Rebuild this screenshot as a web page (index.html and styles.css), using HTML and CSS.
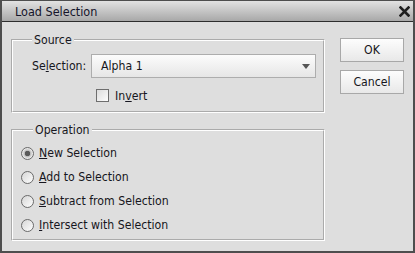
FILE: index.html
```html
<!DOCTYPE html>
<html lang="en">

<head>
  <meta charset="UTF-8">
  <title>Load Selection</title>
  <link rel="stylesheet" href="styles.css">
</head>

<body>
  <div class="dialog">
    <div class="titlebar">
      <span class="title">Load Selection</span>
      <svg class="close" width="11" height="11" viewBox="0 0 11 11">
        <path d="M1.5 1.5 L9.5 9.5 M9.5 1.5 L1.5 9.5" stroke="#1e1e1e" stroke-width="2.6" stroke-linecap="square" />
      </svg>
    </div>

    <div class="content">
      <div class="groups">
        <fieldset class="group group-source">
          <legend>Source</legend>
          <div class="field-row">
            <span class="field-label">Se<u>l</u>ection:</span>
            <div class="select">
              <span>Alpha 1</span>
              <span class="arrow"></span>
            </div>
          </div>
          <div class="check-row">
            <span class="checkbox"></span>
            <span>In<u>v</u>ert</span>
          </div>
        </fieldset>

        <fieldset class="group group-operation">
          <legend>Operation</legend>
          <div class="radio-row"><span class="radio checked"></span><span><u>N</u>ew Selection</span></div>
          <div class="radio-row"><span class="radio"></span><span><u>A</u>dd to Selection</span></div>
          <div class="radio-row"><span class="radio"></span><span><u>S</u>ubtract from Selection</span></div>
          <div class="radio-row"><span class="radio"></span><span><u>I</u>ntersect with Selection</span></div>
        </fieldset>
      </div>

      <div class="buttons">
        <button class="btn">OK</button>
        <button class="btn">Cancel</button>
      </div>
    </div>
  </div>
</body>

</html>
```

FILE: styles.css
```css
body {
  margin: 0;
  padding: 0;
  background: #dedede;
  font-family: "DejaVu Sans Condensed", "DejaVu Sans", sans-serif;
  font-stretch: condensed;
  font-size: 12.2px;
  color: #161620;
}

.dialog {
  width: 415px;
  height: 253px;
  box-sizing: border-box;
  border: 2px solid #4e4e4e;
  border-top-width: 1px;
  background: #dedede;
}

.titlebar {
  height: 20px;
  border-bottom: 1px solid #2e2e2e;
  background: linear-gradient(to bottom, #e2e2e2, #a8a8a8);
  display: flex;
  align-items: center;
  justify-content: space-between;
  padding: 0 3px 0 13px;
}

.title {
  font-size: 12.5px;
  color: #14142a;
}

.close {
  display: block;
  margin-top: 1px;
}

.content {
  display: flex;
  padding: 11px 0 0 9px;
}

.groups {
  width: 314px;
}

.group {
  margin: 0;
  border: 2px groove #ffffff;
  min-width: 0;
}

.group legend {
  padding: 0 2px;
  line-height: 14px;
  background: #dedede;
}

.group-source {
  padding: 7px 7px 9px 19px;
}

.group-operation {
  margin-top: 10px;
  padding: 4px 7px 2px 8px;
}

.group-operation legend {
  margin-left: 12px;
}

.field-row {
  display: flex;
  align-items: center;
  height: 24px;
}

.field-label {
  width: 59px;
}

.select {
  flex: 1;
  height: 24px;
  box-sizing: border-box;
  border: 1px solid #adadad;
  background: linear-gradient(to bottom, #fcfcfc, #e6e6e6);
  display: flex;
  align-items: center;
  justify-content: space-between;
  padding: 0 5px 0 9px;
}

.arrow {
  width: 0;
  height: 0;
  border-left: 4px solid transparent;
  border-right: 4px solid transparent;
  border-top: 5px solid #555;
}

.check-row {
  display: flex;
  align-items: center;
  gap: 6px;
  height: 13px;
  margin: 11px 0 0 64px;
}

.checkbox {
  width: 13px;
  height: 13px;
  box-sizing: border-box;
  border: 1px solid #6e6e6e;
  background: linear-gradient(to bottom right, #dcdcdc, #fdfdfd);
}

.radio-row {
  display: flex;
  align-items: center;
  gap: 5px;
  height: 24px;
}

.radio {
  width: 13px;
  height: 13px;
  box-sizing: border-box;
  border: 1px solid #6a6a6a;
  border-radius: 50%;
  background: linear-gradient(to bottom right, #d6d6d6, #fdfdfd);
  display: flex;
  align-items: center;
  justify-content: center;
}

.radio.checked {
  background: radial-gradient(circle, #5a5a5a 0 2.5px, #bdbdbd 3px, #e8e8e8 5px);
}

.buttons {
  display: flex;
  flex-direction: column;
  gap: 8px;
  margin: 5px 0 0 15px;
}

.btn {
  width: 64px;
  height: 24px;
  border: 1px solid #a8a8a8;
  background: linear-gradient(to bottom, #fdfdfd, #e8e8e8);
  font-family: inherit;
  font-stretch: condensed;
  font-size: 12.2px;
  color: #161620;
  padding: 0;
}
```
